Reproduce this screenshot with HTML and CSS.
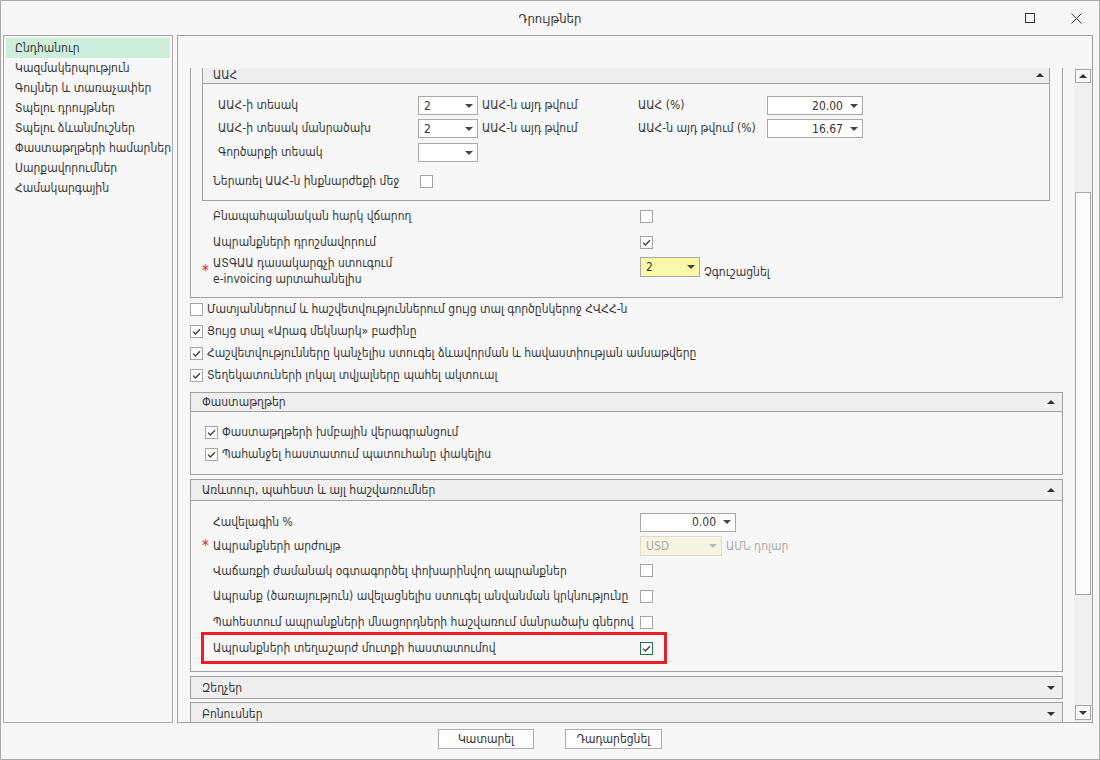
FILE: index.html
```html
<!DOCTYPE html>
<html lang="hy">
<head>
  <meta charset="UTF-8">
  <title>Դրույթներ</title>
  <link rel="stylesheet" href="styles.css">
</head>
<body>
  <div class="window">
    <div class="titlebar">
      <div class="title">Դրույթներ</div>
      <div class="win-btns">
        <span class="win-btn"><span class="ico-max"></span></span>
        <span class="win-btn">
          <svg width="11" height="11" viewBox="0 0 11 11"><path d="M0.5 0.5 L10.5 10.5 M10.5 0.5 L0.5 10.5" stroke="#333" stroke-width="1"/></svg>
        </span>
      </div>
    </div>

    <div class="main-row">
      <ul class="nav">
        <li class="active">Ընդհանուր</li>
        <li>Կազմակերպություն</li>
        <li>Գույներ և տառաչափեր</li>
        <li>Տպելու դրույթներ</li>
        <li>Տպելու ձևանմուշներ</li>
        <li>Փաստաթղթերի համարներ</li>
        <li>Սարքավորումներ</li>
        <li>Համակարգային</li>
      </ul>

      <div class="panel">
        <div class="panel-top"></div>
        <div class="panel-body">
          <div class="viewport">
            <div class="scroll">

              <!-- ընդհանուր խումբ (վերևը դուրս է ոլորված) -->
              <div class="outer">
                <div class="group vat-group">
                  <div class="group-head"><span>ԱԱՀ</span><i class="arr-up"></i></div>
                  <div class="vat">
                    <span class="lbl">ԱԱՀ-ի տեսակ</span>
                    <span class="combo"><span>2</span></span>
                    <span class="lbl after">ԱԱՀ-ն այդ թվում</span>
                    <span class="lbl">ԱԱՀ (%)</span>
                    <span class="combo num"><span>20.00</span></span>

                    <span class="lbl">ԱԱՀ-ի տեսակ մանրածախ</span>
                    <span class="combo"><span>2</span></span>
                    <span class="lbl after">ԱԱՀ-ն այդ թվում</span>
                    <span class="lbl">ԱԱՀ-ն այդ թվում (%)</span>
                    <span class="combo num"><span>16.67</span></span>

                    <span class="lbl">Գործարքի տեսակ</span>
                    <span class="combo"><span></span></span>
                    <span class="fill"></span>

                    <span class="lbl lbl-in">Ներառել ԱԱՀ-ն ինքնարժեքի մեջ</span>
                    <span class="cb vat-cb"></span>
                  </div>
                </div>

                <div class="opts">
                  <div class="opt">
                    <span>Բնապահպանական հարկ վճարող</span>
                    <span class="cb"></span>
                  </div>
                  <div class="opt">
                    <span>Ապրանքների դրոշմավորում</span>
                    <span class="cb"><svg class="tick" width="11" height="11" viewBox="0 0 11 11"><path d="M2 5.6 L4.4 8 L9 3.2"/></svg></span>
                  </div>
                  <div class="opt opt-tall">
                    <span class="req-lbl"><i class="req">*</i><span>ԱՏԳԱԱ դասակարգչի ստուգում<br>e-invoicing արտահանելիս</span></span>
                    <span class="ctl-pair">
                      <span class="combo yellow"><span>2</span></span>
                      <span class="note">Չգուշացնել</span>
                    </span>
                  </div>
                </div>
              </div>

              <div class="checks">
                <div class="chk"><span class="cb"></span>Մատյաններում և հաշվետվություններում ցույց տալ գործընկերոջ ՀՎՀՀ-ն</div>
                <div class="chk"><span class="cb"><svg class="tick" width="11" height="11" viewBox="0 0 11 11"><path d="M2 5.6 L4.4 8 L9 3.2"/></svg></span>Ցույց տալ «Արագ մեկնարկ» բաժինը</div>
                <div class="chk"><span class="cb"><svg class="tick" width="11" height="11" viewBox="0 0 11 11"><path d="M2 5.6 L4.4 8 L9 3.2"/></svg></span>Հաշվետվությունները կանչելիս ստուգել ձևավորման և հավաստիության ամսաթվերը</div>
                <div class="chk"><span class="cb"><svg class="tick" width="11" height="11" viewBox="0 0 11 11"><path d="M2 5.6 L4.4 8 L9 3.2"/></svg></span>Տեղեկատուների լոկալ տվյալները պահել ակտուալ</div>
              </div>

              <div class="group docs">
                <div class="group-head"><span>Փաստաթղթեր</span><i class="arr-up"></i></div>
                <div class="docs-body">
                  <div class="chk"><span class="cb"><svg class="tick" width="11" height="11" viewBox="0 0 11 11"><path d="M2 5.6 L4.4 8 L9 3.2"/></svg></span>Փաստաթղթերի խմբային վերագրանցում</div>
                  <div class="chk"><span class="cb"><svg class="tick" width="11" height="11" viewBox="0 0 11 11"><path d="M2 5.6 L4.4 8 L9 3.2"/></svg></span>Պահանջել հաստատում պատուհանը փակելիս</div>
                </div>
              </div>

              <div class="group trade">
                <div class="group-head"><span>Առևտուր, պահեստ և այլ հաշվառումներ</span><i class="arr-up"></i></div>
                <div class="trade-body">
                  <div class="opt r24">
                    <span>Հավելագին %</span>
                    <span class="combo num wide"><span>0.00</span></span>
                  </div>
                  <div class="opt r24">
                    <span class="req-lbl"><i class="req">*</i><span>Ապրանքների արժույթ</span></span>
                    <span class="ctl-pair mid">
                      <span class="combo disabled"><span>USD</span></span>
                      <span class="note dim">ԱՄՆ դոլար</span>
                    </span>
                  </div>
                  <div class="opt r25">
                    <span>Վաճառքի ժամանակ օգտագործել փոխարինվող ապրանքներ</span>
                    <span class="cb"></span>
                  </div>
                  <div class="opt">
                    <span>Ապրանք (ծառայություն) ավելացնելիս ստուգել անվանման կրկնությունը</span>
                    <span class="cb"></span>
                  </div>
                  <div class="opt">
                    <span>Պահեստում ապրանքների մնացորդների հաշվառում մանրածախ գներով</span>
                    <span class="cb"></span>
                  </div>
                  <div class="opt marked">
                    <span>Ապրանքների տեղաշարժ մուտքի հաստատումով</span>
                    <span class="cb focus"><svg class="tick" width="11" height="11" viewBox="0 0 11 11"><path d="M2 5.6 L4.4 8 L9 3.2"/></svg></span>
                  </div>
                </div>
              </div>

              <div class="group closed first">
                <div class="group-head"><span>Զեղչեր</span><i class="arr-down"></i></div>
              </div>
              <div class="group closed">
                <div class="group-head"><span>Բոնուսներ</span><i class="arr-down"></i></div>
              </div>

            </div>
          </div>

          <div class="scrollbar">
            <span class="sb-btn"><i class="arr-up"></i></span>
            <span class="sb-thumb"></span>
            <span class="sb-btn down"><i class="arr-down"></i></span>
          </div>
        </div>
      </div>
    </div>

    <div class="footer">
      <button class="btn">Կատարել</button>
      <button class="btn wide">Դադարեցնել</button>
    </div>
  </div>
</body>
</html>
```

FILE: styles.css
```css
* {
  box-sizing: border-box;
}
html, body {
  margin: 0;
  padding: 0;
}
body {
  font-family: "DejaVu Sans Condensed", "DejaVu Sans", sans-serif;
  font-stretch: semi-condensed;
  font-size: 12px;
  color: #363636;
  background: #f7f7f7;
}
.window {
  width: 1100px;
  height: 760px;
  border: 1px solid #a9a9a9;
  background: #f7f7f7;
  display: flex;
  flex-direction: column;
}

/* վերնագրի տող */
.titlebar {
  height: 34px;
  flex: none;
  display: grid;
  grid-template-columns: 1fr auto 1fr;
  align-items: center;
}
.title {
  grid-column: 2;
  font-size: 13px;
}
.win-btns {
  grid-column: 3;
  justify-self: end;
  display: flex;
  height: 100%;
}
.win-btn {
  width: 46px;
  display: flex;
  align-items: center;
  justify-content: center;
}
.ico-max {
  width: 10px;
  height: 10px;
  border: 1px solid #333;
}

/* հիմնական մաս */
.main-row {
  height: 688px;
  flex: none;
  display: flex;
  gap: 4px;
  padding: 0 6px 0 2px;
}
.nav {
  width: 170px;
  flex: none;
  margin: 0;
  padding: 2px;
  list-style: none;
  border: 1px solid #a9a9a9;
}
.nav li {
  height: 20px;
  line-height: 21px;
  padding-left: 9px;
  white-space: nowrap;
}
.nav li.active {
  background: #cdeedc;
}
.panel {
  flex: 1;
  border: 1px solid #a0a0a0;
  display: flex;
  flex-direction: column;
}
.panel-top {
  height: 32px;
  flex: none;
}
.panel-body {
  flex: 1;
  min-height: 0;
  display: flex;
}
.viewport {
  flex: 1;
  overflow: hidden;
  padding: 0 11px 0 12px;
}
.scroll {
  margin-top: -6px;
}

/* ոլորման գոտի */
.scrollbar {
  width: 18px;
  flex: none;
  background: #f0f0f0;
  display: flex;
  flex-direction: column;
  align-items: center;
  padding: 1px 0 2px;
}
.sb-btn {
  width: 16px;
  height: 14px;
  border: 1px solid #a8a8a8;
  background: #f7f7f7;
  display: flex;
  align-items: center;
  justify-content: center;
}
.sb-btn.down {
  height: 15px;
  margin-top: auto;
}
.sb-thumb {
  width: 16px;
  height: 403px;
  margin-top: 109px;
  border: 1px solid #a8a8a8;
  background: #fcfcfc;
}

.arr-up, .arr-down {
  display: block;
  width: 0;
  height: 0;
  border-left: 4px solid transparent;
  border-right: 4px solid transparent;
}
.arr-up {
  border-bottom: 4px solid #333;
}
.arr-down {
  border-top: 4px solid #333;
}

/* խմբեր */
.group {
  border: 1px solid #a0a0a0;
}
.group-head {
  height: 21px;
  border-bottom: 1px solid #a0a0a0;
  background: #efefef;
  display: flex;
  align-items: center;
  justify-content: space-between;
  padding: 0 7px 0 11px;
}
.docs .group-head {
  height: 19px;
}
.vat-group .group-head {
  padding: 4px 5px 0 10px;
  line-height: 14px;
}
.group.closed .group-head {
  border-bottom: none;
}
.outer {
  border: 1px solid #a0a0a0;
  border-top: none;
  padding: 0 12px 0 11px;
}

.vat {
  display: grid;
  grid-template-columns: 200px 60px 160px 129px 96px;
  grid-template-rows: 23px 24px 29px 19px;
  align-items: start;
  padding: 12px 0 9px 15px;
}
.lbl {
  line-height: 19px;
  white-space: nowrap;
}
.lbl.after {
  padding-left: 4px;
}
.fill {
  grid-column: span 3;
}
.lbl-in {
  margin-left: -5px;
}
.vat-cb {
  margin: 3px 0 0 2px;
}

/* ընտրության դաշտ */
.combo {
  height: 19px;
  border: 1px solid #a9a9a9;
  background: #fff;
  display: flex;
  align-items: center;
  padding: 0 4px 0 5px;
}
.combo::after {
  content: "";
  margin-left: auto;
  border-left: 4px solid transparent;
  border-right: 4px solid transparent;
  border-top: 4px solid #444;
}
.combo.num {
  justify-content: flex-end;
  gap: 7px;
}
.combo.num::after {
  margin-left: 0;
}
.combo.wide {
  width: 96px;
}
.combo.yellow {
  width: 60px;
  height: 20px;
  background: #f9f9aa;
}
.combo.disabled {
  width: 82px;
  height: 20px;
  background: #f5f5e1;
  border-color: #dcdcd0;
  color: #aaa;
}
.combo.disabled::after {
  border-top-color: #bbb;
}

/* նշավանդակ */
.cb {
  width: 13px;
  height: 13px;
  flex: none;
  border: 1px solid #a5a5a5;
  background: #fff;
  display: flex;
  align-items: center;
  justify-content: center;
}
.cb.focus {
  border-color: #217346;
}
.tick path {
  fill: none;
  stroke: #3c3c3c;
  stroke-width: 1.3;
}

.opts {
  padding: 2px 0 10px 11px;
}
.opt {
  display: grid;
  grid-template-columns: 427px auto;
  align-items: center;
  height: 26px;
  white-space: nowrap;
}
.opt.opt-tall {
  height: 32px;
  align-items: start;
  line-height: 16px;
}
.opt.r24 {
  height: 24px;
}
.opt.r25 {
  height: 25px;
}
.req-lbl {
  display: flex;
  align-items: center;
}
.req {
  font-style: normal;
  color: #e8202a;
  font-size: 15px;
  width: 11px;
  margin-left: -11px;
  line-height: 1;
}
.ctl-pair {
  display: flex;
  align-items: flex-start;
}
.ctl-pair .combo {
  margin-top: 2px;
}
.ctl-pair.mid {
  align-items: center;
}
.ctl-pair.mid .combo {
  margin-top: 0;
}
.note {
  margin: 9px 0 0 4px;
  line-height: 16px;
}
.ctl-pair.mid .note {
  margin-top: 0;
}
.note.dim {
  color: #aaa;
}

.checks .chk {
  height: 22px;
}
.chk {
  display: flex;
  align-items: center;
  gap: 4px;
  white-space: nowrap;
}
.checks {
  margin-bottom: 6px;
}

.docs-body {
  padding: 9px 0 9px 14px;
}
.docs-body .chk {
  height: 22px;
}

.trade {
  margin-top: 4px;
}
.trade-body {
  padding: 9px 0 10px 22px;
}
.opt.marked {
  width: 460px;
  margin-left: -9px;
  padding-left: 9px;
  outline: 3px solid #e8202a;
}

.group.closed.first {
  margin-top: 4px;
}
.group.closed + .group.closed {
  margin-top: 3px;
}

/* ստորին կոճակներ */
.footer {
  flex: 1;
  display: flex;
  justify-content: center;
  align-items: flex-start;
  gap: 31px;
  padding-top: 6px;
}
.btn {
  width: 96px;
  height: 20px;
  padding: 0;
  border: 1px solid #adadad;
  background: #fdfdfd;
  font-family: inherit;
  font-size: 12px;
  color: #333;
}
.btn.wide {
  width: 97px;
}
```
